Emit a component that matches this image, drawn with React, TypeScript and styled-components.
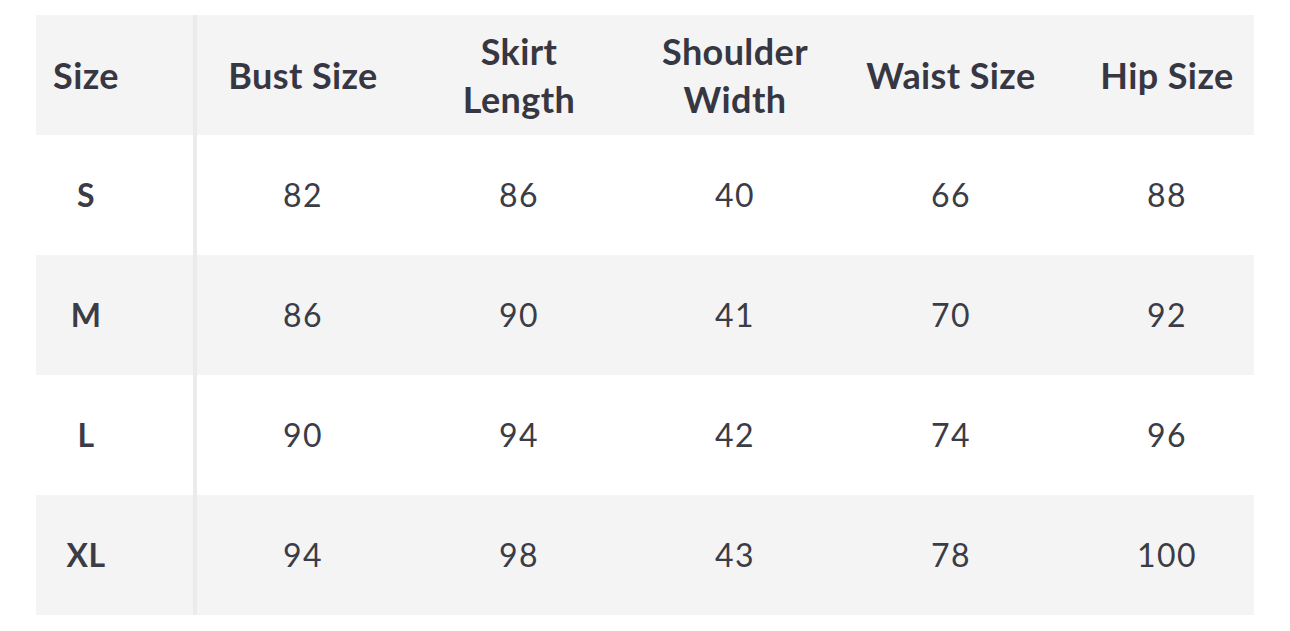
import React from "react";
import styled, { createGlobalStyle } from "styled-components";

const GlobalStyle = createGlobalStyle`
  html, body {
    margin: 0;
    padding: 0;
    background: #ffffff;
  }
  body {
    font-family: Lato, "Open Sans", sans-serif;
    color: #383943;
  }
`;

const Frame = styled.div`
  padding: 15px 0 0 36px;
`;

const Scroller = styled.div`
  width: 1218px;
  overflow: hidden;
`;

const Table = styled.div`
  display: grid;
  grid-template-columns: 159px repeat(5, 216px);
  width: max-content;
`;

const Cell = styled.div<{ $shade: boolean; $head?: boolean }>`
  height: 120px;
  display: flex;
  align-items: center;
  justify-content: center;
  text-align: center;
  background: ${(p) => (p.$shade ? "#f4f4f4" : "#ffffff")};
  font-size: ${(p) => (p.$head ? "36px" : "32px")};
  font-weight: ${(p) => (p.$head ? 700 : 400)};
  letter-spacing: ${(p) => (p.$head ? "0.4px" : "1.5px")};
  line-height: 48px;
  color: ${(p) => (p.$head ? "#363742" : "#3b3c46")};
`;

const SizeCell = styled(Cell)`
  position: relative;
  justify-content: flex-start;
  font-weight: 700;
  letter-spacing: 0.4px;

  &::after {
    content: "";
    position: absolute;
    z-index: 1;
    top: 0;
    bottom: 0;
    right: -2px;
    width: 4px;
    background: #ebebeb;
  }
`;

const SizeLabel = styled.span`
  width: 100px;
  text-align: center;
`;

const headers = ["Bust Size", "Skirt\nLength", "Shoulder\nWidth", "Waist Size", "Hip Size"];

const rows: { size: string; values: number[] }[] = [
  { size: "S", values: [82, 86, 40, 66, 88] },
  { size: "M", values: [86, 90, 41, 70, 92] },
  { size: "L", values: [90, 94, 42, 74, 96] },
  { size: "XL", values: [94, 98, 43, 78, 100] },
];

const App: React.FC = () => {
  return (
    <Frame>
      <GlobalStyle />
      <Scroller>
        <Table>
          <SizeCell $shade $head>
            <SizeLabel>Size</SizeLabel>
          </SizeCell>
          {headers.map((h) => (
            <Cell key={h} $shade $head>
              <span>
                {h.split("\n").map((line, i) => (
                  <React.Fragment key={line}>
                    {i > 0 && <br />}
                    {line}
                  </React.Fragment>
                ))}
              </span>
            </Cell>
          ))}
          {rows.map((row, r) => {
            const shade = r % 2 === 1;
            return (
              <React.Fragment key={row.size}>
                <SizeCell $shade={shade}>
                  <SizeLabel>{row.size}</SizeLabel>
                </SizeCell>
                {row.values.map((v, i) => (
                  <Cell key={i} $shade={shade}>
                    {v}
                  </Cell>
                ))}
              </React.Fragment>
            );
          })}
        </Table>
      </Scroller>
    </Frame>
  );
};

export default App;
